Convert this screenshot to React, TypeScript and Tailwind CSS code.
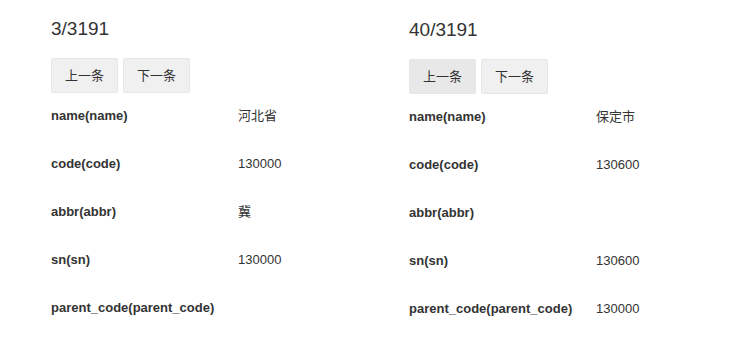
const panels = [
  {
    index: "3/3191",
    active: false,
    rows: [
      { label: "name(name)", value: "河北省" },
      { label: "code(code)", value: "130000" },
      { label: "abbr(abbr)", value: "冀" },
      { label: "sn(sn)", value: "130000" },
      { label: "parent_code(parent_code)", value: "" },
    ],
  },
  {
    index: "40/3191",
    active: true,
    rows: [
      { label: "name(name)", value: "保定市" },
      { label: "code(code)", value: "130600" },
      { label: "abbr(abbr)", value: "" },
      { label: "sn(sn)", value: "130600" },
      { label: "parent_code(parent_code)", value: "130000" },
    ],
  },
];

function Panel({ data, offset }: { data: (typeof panels)[number]; offset: boolean }) {
  return (
    <div className={`w-[358px] shrink-0 ${offset ? "pt-[1px]" : ""}`}>
      <div className="mt-[17px] text-[19px] leading-[24px] text-[#333]">{data.index}</div>
      <div className="flex gap-[5px] mt-[17px]">
        <button
          className={`w-[67px] h-[35px] text-[13px] text-[#333] border border-[#e6e6e6] rounded-[2px] ${
            data.active ? "bg-[#e8e8e8]" : "bg-[#f0f0f0]"
          }`}
        >
          上一条
        </button>
        <button className="w-[67px] h-[35px] text-[13px] text-[#333] bg-[#f0f0f0] border border-[#e6e6e6] rounded-[2px]">
          下一条
        </button>
      </div>
      <table className="mt-[-1px] text-[13px] text-[#333]">
        <tbody>
          {data.rows.map((r) => (
            <tr key={r.label} className="h-[48px]">
              <td className="w-[187px] font-bold align-middle">{r.label}</td>
              <td className="align-middle">{r.value}</td>
            </tr>
          ))}
        </tbody>
      </table>
    </div>
  );
}

export default function App() {
  return (
    <div
      className="w-[736px] h-[345px] bg-white flex pl-[51px] overflow-hidden"
      style={{ fontFamily: '"Liberation Sans", Arial, "Noto Sans CJK SC", sans-serif' }}
    >
      <Panel data={panels[0]} offset={false} />
      <Panel data={panels[1]} offset={true} />
    </div>
  );
}
